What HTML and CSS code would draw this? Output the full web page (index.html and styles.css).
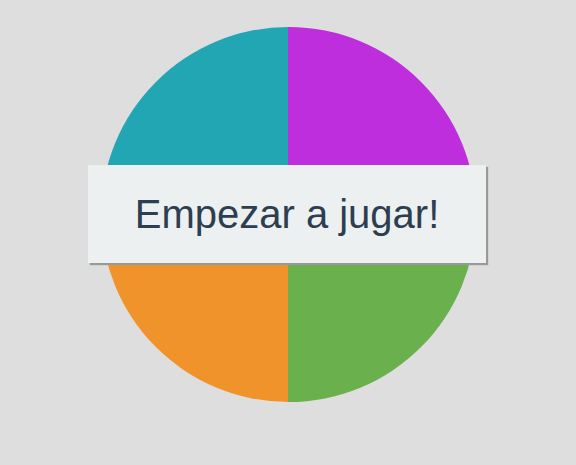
FILE: index.html
```html
<!DOCTYPE html>
<html lang="es">
<head>
<meta charset="utf-8">
<title>Simon</title>
<link rel="stylesheet" href="styles.css">
</head>
<body>
<main class="stage">
  <div class="board">
    <div class="quad teal"></div>
    <div class="quad magenta"></div>
    <div class="quad orange"></div>
    <div class="quad green"></div>
  </div>
  <button class="start">Empezar a jugar!</button>
</main>
</body>
</html>
```

FILE: styles.css
```css
html, body {
  margin: 0;
  padding: 0;
  background: #dedede;
}
body {
  padding-top: 27px;
  font-family: "Liberation Sans", Arial, sans-serif;
}
.stage {
  display: grid;
  place-items: center;
  justify-content: center;
}
.board {
  grid-area: 1 / 1;
  width: 375px;
  height: 375px;
  border-radius: 50%;
  overflow: hidden;
  display: grid;
  grid-template-columns: 1fr 1fr;
  grid-template-rows: 1fr 1fr;
}
.teal { background: #22a6b3; }
.magenta { background: #be2edd; }
.orange { background: #f0932b; }
.green { background: #6ab04c; }
.start {
  grid-area: 1 / 1;
  width: 398px;
  height: 98px;
  margin: 0 2px 1px 0;
  border: none;
  background: #ecf0f1;
  color: #2c3e50;
  font-family: "Liberation Sans", Arial, sans-serif;
  font-size: 40px;
  padding: 0;
  box-shadow: 2px 2px 1px #999;
}
```
